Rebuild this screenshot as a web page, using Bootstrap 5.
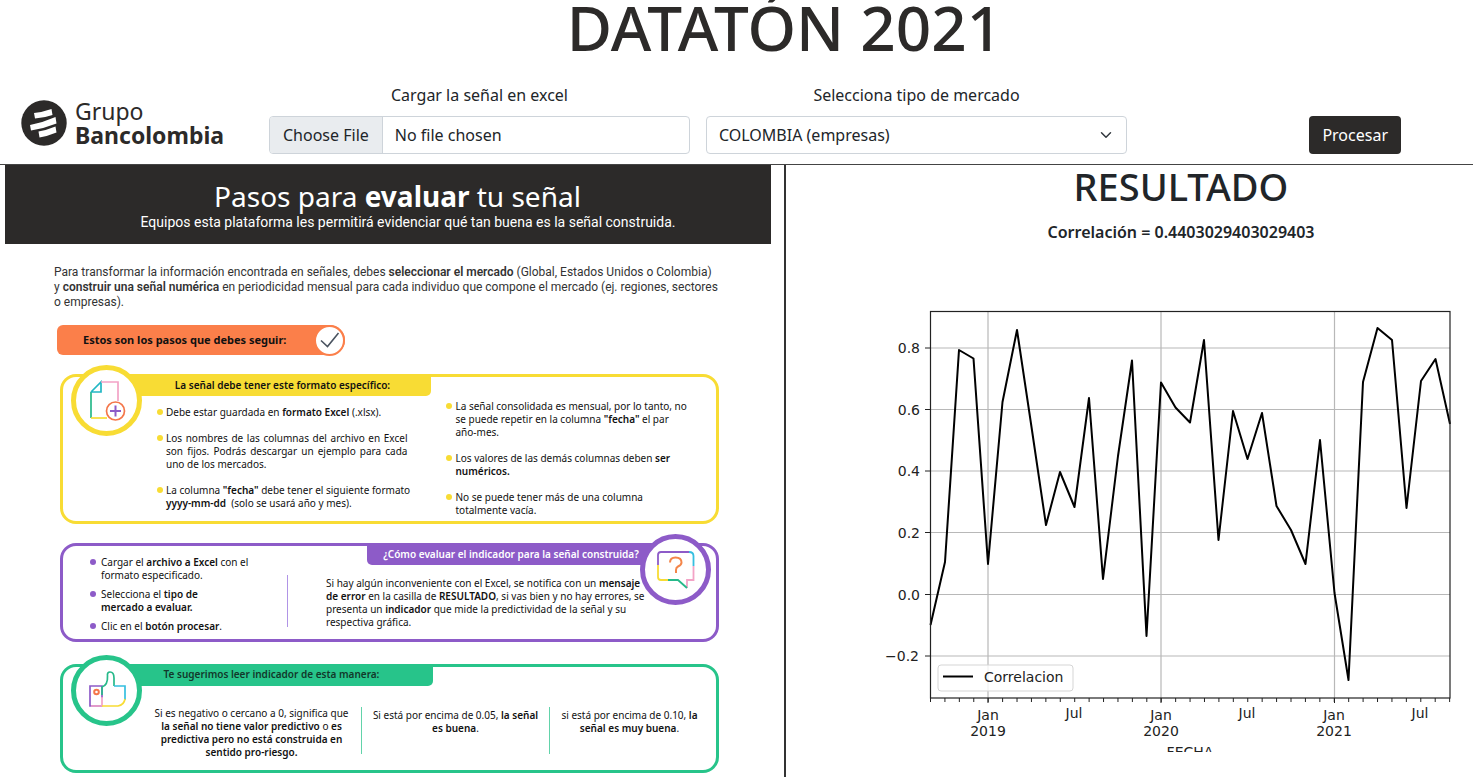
<!DOCTYPE html>
<html lang="es">
<head>
<meta charset="utf-8">
<meta name="viewport" content="width=device-width, initial-scale=1">
<title>Datatón 2021</title>
<link href="https://cdn.jsdelivr.net/npm/bootstrap@5.3.0/dist/css/bootstrap.min.css" rel="stylesheet">
<style>
:root { --ink: #2c2a29; --orange: #fb7f4a; --yellow: #f8dc34; --purple: #8d5bc8; --green: #27c48a; }
body { font-family: "Noto Sans", "Open Sans", sans-serif; overflow-x: hidden; }
.page-title { font-size: 62px; line-height: 62px; font-weight: 500; color: var(--ink); margin: -4px 0 25px; padding-left: 96px; }
.top-grid { display: grid; grid-template-columns: minmax(0, 253fr) minmax(0, 421fr) minmax(0, 421fr) minmax(0, 330fr); column-gap: 16px; padding-bottom: 10px; border-bottom: 1px solid #444; }
.top-grid .form-label { margin-bottom: 9px; }
.top-grid .form-control, .top-grid .form-select { border-color: #ced4da; border-radius: 4px; color: #212529; }
.top-grid .form-control::file-selector-button { background: #e9ecef; padding-left: 13px; padding-right: 13px; }
.brand { color: var(--ink); font-size: 23px; line-height: 24px; gap: 8px; padding: 0 0 7px 21px; }
.btn-run { background: var(--ink); color: #fff; border-radius: 4px; margin-right: 72px; }
.btn-run:hover { background: #444; color: #fff; }
.board { display: grid; grid-template-columns: minmax(0, 786fr) minmax(0, 687fr); }
.guide { border-right: 2px solid #333; padding: 0 13px 4px 5px; font-size: 10px; line-height: 13px; color: #111; }
.guide b { font-weight: 600; }
.guide-head { background: var(--ink); color: #fff; padding: 13px 0 13px; }
.guide-head h2 { font-size: 28px; line-height: 36px; font-weight: 400; margin: 0; padding-left: 19px; }
.guide-head h2 b { font-weight: 700; }
.guide-head p { font-family: Roboto, "Noto Sans", sans-serif; font-size: 14px; line-height: 17px; margin: 0; padding-left: 40px; }
.guide-body { padding: 21px 52px 0 55px; }
.intro { font-family: Roboto, "Noto Sans", sans-serif; font-size: 12px; line-height: 15px; margin: 0 0 15px -6px; color: #333; }
.line { display: block; white-space: nowrap; }
.justified .line { text-align-last: justify; }
.pill { background: var(--orange); border-radius: 6px 15px 15px 6px; width: 288px; height: 30px; margin: 0 0 19px -3px; padding-left: 26px; font-size: 11px; font-weight: 700; }
.pill-text { padding-bottom: 2px; }
.pill-check { width: 31px; height: 31px; border: 2px solid var(--orange); border-radius: 50%; background: #fff; }
.step { position: relative; border: 3px solid var(--tone); border-radius: 16px; }
.step-icon { position: absolute; top: -12px; width: 71px; height: 71px; border: 5px solid var(--tone); border-radius: 50%; background: #fff; }
.step-icon.at-start { left: 8px; }
.step-icon.at-end { right: 5px; }
.tab { background: var(--tone); height: 19px; font-weight: 600; font-size: 10px; line-height: 17px; white-space: nowrap; text-align: center; margin: 0; }
.tab-start { margin-left: 67px; border-radius: 0 0 5px 0; }
.step-format { --tone: var(--yellow); min-height: 150px; margin-bottom: 19px; }
.step-format .tab { width: 301px; padding-left: 4px; }
.step-run { --tone: var(--purple); min-height: 99px; margin-bottom: 22px; }
.step-read { --tone: var(--green); min-height: 109px; }
.step-read .tab { width: 303px; padding-right: 20px; line-height: 14px; color: #12382a; }
.format-cols { display: grid; grid-template-columns: minmax(0, 250fr) minmax(0, 269fr); column-gap: 39px; padding: 4px 0 0 94px; }
.dots { list-style: none; margin: 0; padding: 0; display: flex; flex-direction: column; gap: 13px; }
.dots li { display: flex; gap: 3px; }
.dots li::before { content: ""; flex: none; width: 6px; height: 6px; margin-top: 3px; border-radius: 50%; background: var(--tone); }
.dots li > div { flex: 1; min-width: 0; }
.first-dots { padding-top: 6px; }
.run-list { width: 224px; padding: 10px 0 0 27px; gap: 6px; }
.run-list li { gap: 5px; }
.run-rule { border-left: 1px solid #b094e6; margin: 29px 0 12px; }
.run-tab { margin: 0 56px 0 79px; padding-right: 5px; border-radius: 0 0 0 5px; color: #fff; }
.run-text { margin: 12px 0 0 38px; }
.read-cols { display: grid; grid-template-columns: minmax(0, 219fr) minmax(0, 188fr) minmax(0, 160fr); padding: 21px 7px 0 79px; text-align: center; }
.read-cols p { margin: 0; }
.read-cols p + p { border-left: 1px solid #62d3aa; height: 47px; padding-top: 2px; }
.result h2 { font-size: 38px; line-height: 42px; font-weight: 500; margin: 0; padding-left: 103px; }
.result p { font-weight: 600; line-height: 24px; margin: 13px 0 16px; padding-left: 103px; }
.chart text { font-family: "DejaVu Sans", sans-serif; font-size: 14px; fill: #222; }
</style>
</head>
<body class="bg-white">
<div class="min-vh-100 d-flex flex-column">
<header>
  <h1 class="page-title text-center">DATATÓN 2021</h1>
  <form class="top-grid align-items-end">
    <div class="brand d-flex align-items-center">
      <svg width="46" height="46" viewBox="0 0 46 46" aria-hidden="true">
        <circle cx="23" cy="23" r="22.700" fill="#2c2a29"/>
        <g fill="#fff">
          <path d="M13 13Q22 12 30.500 9L31.500 15Q23 18 14 18.500Z"/>
          <path d="M9 25Q22 22.500 34.500 17L35.500 23.500Q23 28.500 10 30.500Z"/>
          <path d="M17.500 31.500Q26 30 34.500 26.500L35.500 32.500Q27 36 18.500 37.500Z"/>
        </g>
      </svg>
      <div>Grupo<br><b>Bancolombia</b></div>
    </div>
    <div>
      <label for="signal" class="form-label d-block text-center">Cargar la señal en excel</label>
      <input id="signal" type="file" class="form-control">
    </div>
    <div>
      <label for="market" class="form-label d-block text-center">Selecciona tipo de mercado</label>
      <select id="market" class="form-select"><option>COLOMBIA (empresas)</option></select>
    </div>
    <div class="text-end"><button type="button" class="btn btn-run">Procesar</button></div>
  </form>
</header>

<main class="board flex-grow-1">
  <section class="guide">
    <div class="guide-head text-center">
      <h2>Pasos para <b>evaluar</b> tu señal</h2>
      <p>Equipos esta plataforma les permitirá evidenciar qué tan buena es la señal construida.</p>
    </div>
    <div class="guide-body">
      <p class="intro">
        <span class="line">Para transformar la información encontrada en señales, debes <b>seleccionar el mercado</b> (Global, Estados Unidos o Colombia)</span>
        <span class="line">y <b>construir una señal numérica</b> en periodicidad mensual para cada individuo que compone el mercado (ej. regiones, sectores</span>
        <span class="line">o empresas).</span>
      </p>

      <div class="pill d-flex align-items-center justify-content-between">
        <span class="pill-text">Estos son los pasos que debes seguir:</span>
        <span class="pill-check d-flex align-items-center justify-content-center">
          <svg width="20" height="18" viewBox="0 0 20 18" fill="none" stroke="#4a5360" stroke-width="1.600" aria-hidden="true"><path d="M1 9.500L7.500 15.500L18.500 2"/></svg>
        </span>
      </div>

      <div class="step step-format">
        <span class="step-icon at-start d-flex align-items-center justify-content-center">
          <svg width="40" height="42" viewBox="0 0 40 42" fill="none" stroke-width="1.700" aria-hidden="true">
            <path d="M4 38V12" stroke="#27b98a"/><path d="M4 12L14 2V12H4" stroke="#22b7c4"/>
            <path d="M14 2H31V21" stroke="#f3a3c6"/><path d="M4 38H20" stroke="#f8dc34"/>
            <circle cx="28.500" cy="31" r="9" stroke="#f4764a"/><path d="M28.500 25.500V36.500M23 31H34" stroke="#8d5bc8" stroke-width="2"/>
          </svg>
        </span>
        <h3 class="tab tab-start">La señal debe tener este formato específico:</h3>
        <div class="format-cols">
          <ul class="dots first-dots">
            <li><div><span class="line">Debe estar guardada en <b>formato Excel</b> (.xlsx).</span></div></li>
            <li><div><span class="justified"><span class="line">Los nombres de las columnas del archivo en Excel</span><span class="line">son fijos. Podrás descargar un ejemplo para cada</span></span><span class="line">uno de los mercados.</span></div></li>
            <li><div><span class="justified"><span class="line">La columna <b>"fecha"</b> debe tener el siguiente formato</span></span><span class="line"><b>yyyy-mm-dd</b> &nbsp;(solo se usará año y mes).</span></div></li>
          </ul>
          <ul class="dots">
            <li><div><span class="line">La señal consolidada es mensual, por lo tanto, no</span><span class="line">se puede repetir en la columna <b>"fecha"</b> el par</span><span class="line">año-mes.</span></div></li>
            <li><div><span class="line">Los valores de las demás columnas deben <b>ser</b></span><span class="line"><b>numéricos.</b></span></div></li>
            <li><div><span class="line">No se puede tener más de una columna</span><span class="line">totalmente vacía.</span></div></li>
          </ul>
        </div>
      </div>

      <div class="step step-run d-flex">
        <ul class="dots run-list flex-shrink-0">
          <li><div><span class="line">Cargar el <b>archivo a Excel</b> con el</span><span class="line">formato especificado.</span></div></li>
          <li><div><span class="line">Selecciona el <b>tipo de</b></span><span class="line"><b>mercado a evaluar.</b></span></div></li>
          <li><div><span class="line">Clic en el <b>botón procesar</b>.</span></div></li>
        </ul>
        <div class="run-rule"></div>
        <div class="flex-fill">
          <h3 class="tab run-tab">¿Cómo evaluar el indicador para la señal construida?</h3>
          <p class="run-text">
            <span class="line">Si hay algún inconveniente con el Excel, se notifica con un <b>mensaje</b></span>
            <span class="line"><b>de error</b> en la casilla de <b>RESULTADO</b>, si vas bien y no hay errores, se</span>
            <span class="line">presenta un <b>indicador</b> que mide la predictividad de la señal y su</span>
            <span class="line">respectiva gráfica.</span>
          </p>
        </div>
        <span class="step-icon at-end d-flex align-items-center justify-content-center">
          <svg width="40" height="42" viewBox="0 0 40 42" fill="none" stroke-width="1.800" aria-hidden="true">
            <path d="M2 16V6Q2 3 5 3H33" stroke="#8d5bc8"/><path d="M33 3Q37.500 3 37.500 7V17" stroke="#35bfe0"/>
            <path d="M37.500 17V31H31V39" stroke="#f3a3c6"/><path d="M2 16V28Q2 31 5 31H12" stroke="#f8dc34"/>
            <path d="M12 31H22L31 39" stroke="#27b98a"/>
            <path d="M14 13.500Q14 8.500 19.500 8.500Q25.500 8.500 25.500 13.500Q25.500 16 22 17.500Q20 18.500 20 21V24" stroke="#f4864a" stroke-width="2"/>
          </svg>
        </span>
      </div>

      <div class="step step-read">
        <span class="step-icon at-start d-flex align-items-center justify-content-center">
          <svg width="40" height="42" viewBox="0 0 40 42" fill="none" stroke-width="1.700" aria-hidden="true">
            <path d="M15 36H3V16H15V28" stroke="#8d5bc8"/><path d="M4 36H15V27" stroke="#f3a3c6"/>
            <path d="M15 25V17Q21 15 20.500 6Q20 2 23 2Q27 2 27 8V16" stroke="#27b98a"/>
            <path d="M27 16H38V30" stroke="#35bfe0"/><path d="M15 36H31Q37 35 38 29" stroke="#f8dc34"/>
            <circle cx="9.500" cy="22" r="2.300" stroke="#f4764a" stroke-width="2"/>
          </svg>
        </span>
        <h3 class="tab tab-start">Te sugerimos leer indicador de esta manera:</h3>
        <div class="read-cols">
          <p><span class="line">Si es negativo o cercano a 0, significa que</span><span class="line"><b>la señal no tiene valor predictivo</b> o <b>es</b></span><span class="line"><b>predictiva pero no está construida en</b></span><span class="line"><b>sentido pro-riesgo.</b></span></p>
          <p><span class="line">Si está por encima de 0.05, <b>la señal</b></span><span class="line"><b>es buena</b>.</span></p>
          <p><span class="line">si está por encima de 0.10, <b>la</b></span><span class="line"><b>señal es muy buena</b>.</span></p>
        </div>
      </div>
    </div>
  </section>

  <section class="result text-center">
    <h2>RESULTADO</h2>
    <p>Correlación = 0.4403029403029403</p>
    <svg class="chart d-block w-100" viewBox="786 260 687 492" role="img" aria-label="Correlacion por FECHA">
      <g stroke="#b8b8b8" stroke-width="1.200">
        <path d="M930 348H1450M930 409.500H1450M930 471H1450M930 532.500H1450M930 594.500H1450M930 656H1450M988 311V698M1161 311V698M1334.500 311V698"/>
      </g>
      <polyline fill="none" stroke="#000" stroke-width="2" stroke-linejoin="round" points="930.500,625 945,562 959,350 973.500,358.500 988,564 1002.500,402 1017,330 1031.500,427 1046,525 1060,472 1074.500,507 1089,398 1103,579 1118,456 1132,360.500 1146.500,636 1161,382.500 1175.500,407.500 1190,422.500 1204,340 1218.500,540 1233,411 1247.500,459 1262,413 1276.500,506 1291,530 1305.500,564 1320,440 1334.500,593 1348.500,680 1363,382 1377.500,328 1392,340 1406.500,508 1421,381 1435.500,359 1450,424"/>
      <rect x="938" y="665" width="135" height="26" rx="3" fill="#fff" fill-opacity=".8" stroke="#d5d5d5"/>
      <path d="M943 676.500H973" stroke="#000" stroke-width="2"/>
      <rect x="930.500" y="311.500" width="519.500" height="386.500" fill="none" stroke="#222" stroke-width="1.200"/>
      <path d="M925 348H930M925 409.500H930M925 471H930M925 532.500H930M925 594.500H930M925 656H930M988 698V703M1161 698V703M1334.500 698V703" stroke="#222"/>
      <path d="M930 700H1451" stroke="#222" stroke-width="4" stroke-dasharray="1 13.420"/>
      <text x="984" y="682">Correlacion</text>
      <g text-anchor="end">
        <text x="920" y="353">0.8</text><text x="920" y="415">0.6</text><text x="920" y="476">0.4</text>
        <text x="920" y="538">0.2</text><text x="920" y="600">0.0</text><text x="919" y="661">−0.2</text>
      </g>
      <g text-anchor="middle">
        <text x="988" y="720">Jan</text><text x="988" y="736">2019</text>
        <text x="1074" y="718">Jul</text>
        <text x="1161" y="720">Jan</text><text x="1161" y="736">2020</text>
        <text x="1247" y="718">Jul</text>
        <text x="1334" y="720">Jan</text><text x="1334" y="736">2021</text>
        <text x="1420" y="718">Jul</text>
        <text x="1190" y="757">FECHA</text>
      </g>
    </svg>
  </section>
</main>
</div>
<script src="https://cdn.jsdelivr.net/npm/bootstrap@5.3.0/dist/js/bootstrap.bundle.min.js"></script>
</body>
</html>
